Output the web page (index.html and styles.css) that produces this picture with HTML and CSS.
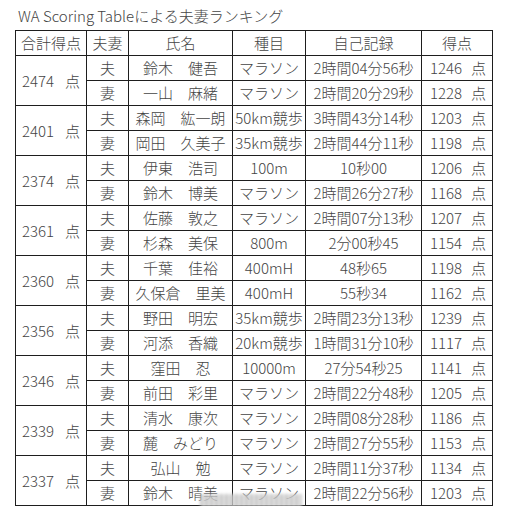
FILE: index.html
```html
<!DOCTYPE html>
<html lang="ja">
<head>
<meta charset="utf-8">
<link rel="stylesheet" href="styles.css">
</head>
<body>
<div class="page">
  <h1 class="title">WA Scoring Tableによる夫妻ランキング</h1>
  <table class="rank">
    <colgroup>
      <col class="c1"><col class="c2"><col class="c3"><col class="c4"><col class="c5"><col class="c6">
    </colgroup>
    <thead>
      <tr><th>合計得点</th><th>夫妻</th><th>氏名</th><th>種目</th><th>自己記録</th><th>得点</th></tr>
    </thead>
    <tbody>
      <tr class="h"><td rowspan="2" class="tot"><div class="pt"><span>2474</span><span>点</span></div></td><td>夫</td><td>鈴木　健吾</td><td>マラソン</td><td>2時間04分56秒</td><td class="sc"><div class="pt"><span>1246</span><span>点</span></div></td></tr>
      <tr class="w"><td>妻</td><td>一山　麻緒</td><td>マラソン</td><td>2時間20分29秒</td><td class="sc"><div class="pt"><span>1228</span><span>点</span></div></td></tr>

      <tr class="h"><td rowspan="2" class="tot"><div class="pt"><span>2401</span><span>点</span></div></td><td>夫</td><td>森岡　紘一朗</td><td>50km競歩</td><td>3時間43分14秒</td><td class="sc"><div class="pt"><span>1203</span><span>点</span></div></td></tr>
      <tr class="w"><td>妻</td><td>岡田　久美子</td><td>35km競歩</td><td>2時間44分11秒</td><td class="sc"><div class="pt"><span>1198</span><span>点</span></div></td></tr>

      <tr class="h"><td rowspan="2" class="tot"><div class="pt"><span>2374</span><span>点</span></div></td><td>夫</td><td>伊東　浩司</td><td>100m</td><td>10秒00</td><td class="sc"><div class="pt"><span>1206</span><span>点</span></div></td></tr>
      <tr class="w"><td>妻</td><td>鈴木　博美</td><td>マラソン</td><td>2時間26分27秒</td><td class="sc"><div class="pt"><span>1168</span><span>点</span></div></td></tr>

      <tr class="h"><td rowspan="2" class="tot"><div class="pt"><span>2361</span><span>点</span></div></td><td>夫</td><td>佐藤　敦之</td><td>マラソン</td><td>2時間07分13秒</td><td class="sc"><div class="pt"><span>1207</span><span>点</span></div></td></tr>
      <tr class="w"><td>妻</td><td>杉森　美保</td><td>800m</td><td>2分00秒45</td><td class="sc"><div class="pt"><span>1154</span><span>点</span></div></td></tr>

      <tr class="h"><td rowspan="2" class="tot"><div class="pt"><span>2360</span><span>点</span></div></td><td>夫</td><td>千葉　佳裕</td><td>400mH</td><td>48秒65</td><td class="sc"><div class="pt"><span>1198</span><span>点</span></div></td></tr>
      <tr class="w"><td>妻</td><td>久保倉　里美</td><td>400mH</td><td>55秒34</td><td class="sc"><div class="pt"><span>1162</span><span>点</span></div></td></tr>

      <tr class="h"><td rowspan="2" class="tot"><div class="pt"><span>2356</span><span>点</span></div></td><td>夫</td><td>野田　明宏</td><td>35km競歩</td><td>2時間23分13秒</td><td class="sc"><div class="pt"><span>1239</span><span>点</span></div></td></tr>
      <tr class="w"><td>妻</td><td>河添　香織</td><td>20km競歩</td><td>1時間31分10秒</td><td class="sc"><div class="pt"><span>1117</span><span>点</span></div></td></tr>

      <tr class="h"><td rowspan="2" class="tot"><div class="pt"><span>2346</span><span>点</span></div></td><td>夫</td><td>窪田　忍</td><td>10000m</td><td>27分54秒25</td><td class="sc"><div class="pt"><span>1141</span><span>点</span></div></td></tr>
      <tr class="w"><td>妻</td><td>前田　彩里</td><td>マラソン</td><td>2時間22分48秒</td><td class="sc"><div class="pt"><span>1205</span><span>点</span></div></td></tr>

      <tr class="h"><td rowspan="2" class="tot"><div class="pt"><span>2339</span><span>点</span></div></td><td>夫</td><td>清水　康次</td><td>マラソン</td><td>2時間08分28秒</td><td class="sc"><div class="pt"><span>1186</span><span>点</span></div></td></tr>
      <tr class="w"><td>妻</td><td>麓　みどり</td><td>マラソン</td><td>2時間27分55秒</td><td class="sc"><div class="pt"><span>1153</span><span>点</span></div></td></tr>

      <tr class="h"><td rowspan="2" class="tot"><div class="pt"><span>2337</span><span>点</span></div></td><td>夫</td><td>弘山　勉</td><td>マラソン</td><td>2時間11分37秒</td><td class="sc"><div class="pt"><span>1134</span><span>点</span></div></td></tr>
      <tr class="w"><td>妻</td><td>鈴木　晴美</td><td>マラソン</td><td>2時間22分56秒</td><td class="sc"><div class="pt"><span>1203</span><span>点</span></div></td></tr>
    </tbody>
  </table>
  <div class="mark"></div>
</div>
</body>
</html>
```

FILE: styles.css
```css
html, body {
  margin: 0;
  padding: 0;
  background: #ffffff;
}
.page {
  position: relative;
  padding: 5px 0 0 15px;
  font-family: "Noto Sans CJK JP", "Noto Sans", sans-serif;
  font-weight: 300;
  color: #444;
}
.title {
  margin: 0 0 0 3px;
  height: 25px;
  font-size: 15px;
  font-weight: 300;
  line-height: 22px;
  white-space: nowrap;
}
.rank {
  border-collapse: collapse;
  table-layout: fixed;
  width: 477px;
  font-size: 15px;
}
.c1 { width: 71px; }
.c2 { width: 42px; }
.c3 { width: 104px; }
.c4 { width: 73px; }
.c5 { width: 116px; }
.c6 { width: 71px; }
.rank th, .rank td {
  border: 1px solid #1e1e1e;
  height: 24px;
  padding: 0;
  text-align: center;
  vertical-align: middle;
  font-weight: 300;
  line-height: 20px;
  white-space: nowrap;
}
.rank tr.h td {
  border-bottom: 1px dashed #333;
}
.rank tr.h td.tot {
  border-bottom: 1px solid #1e1e1e;
}
.pt {
  display: flex;
  justify-content: space-between;
}
.tot .pt {
  padding: 0 6px 0 6px;
}
.sc .pt {
  padding: 0 6px 0 8px;
}
.mark {
  position: absolute;
  left: 200px;
  top: 494px;
  width: 102px;
  height: 13px;
  background: repeating-linear-gradient(90deg, #b8b8b8 0 3px, #e6e6e6 3px 5px);
  filter: blur(1.5px);
  opacity: 0.8;
}
```
